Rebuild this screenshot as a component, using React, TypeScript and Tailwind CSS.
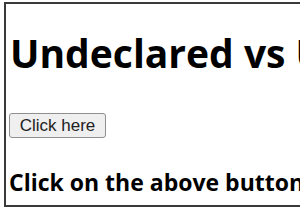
export default function App() {
  return (
    <div className="relative w-[300px] h-[210px] overflow-hidden bg-white">
      <div className="mt-[2px] ml-[4px] w-[340px] h-[205px] border-2 border-r-0 border-[#3a3a3a] pl-[2px] font-['Open_Sans',sans-serif] text-black">
        <h1 className="mt-[24px] ml-[2px] text-[39px] font-bold leading-[50px] whitespace-nowrap">Undeclared vs Unassigned</h1>
        <button className="mt-[35px] ml-[1px] h-[25px] w-[97px] rounded-[3px] border border-[#8f8f8f] bg-[#efefef] font-['Liberation_Sans',sans-serif] text-[17px] leading-none text-[#222]">
          Click here
        </button>
        <p className="mt-[27px] ml-[1px] text-[23px] font-bold whitespace-nowrap">Click on the above button to see</p>
      </div>
    </div>
  );
}
